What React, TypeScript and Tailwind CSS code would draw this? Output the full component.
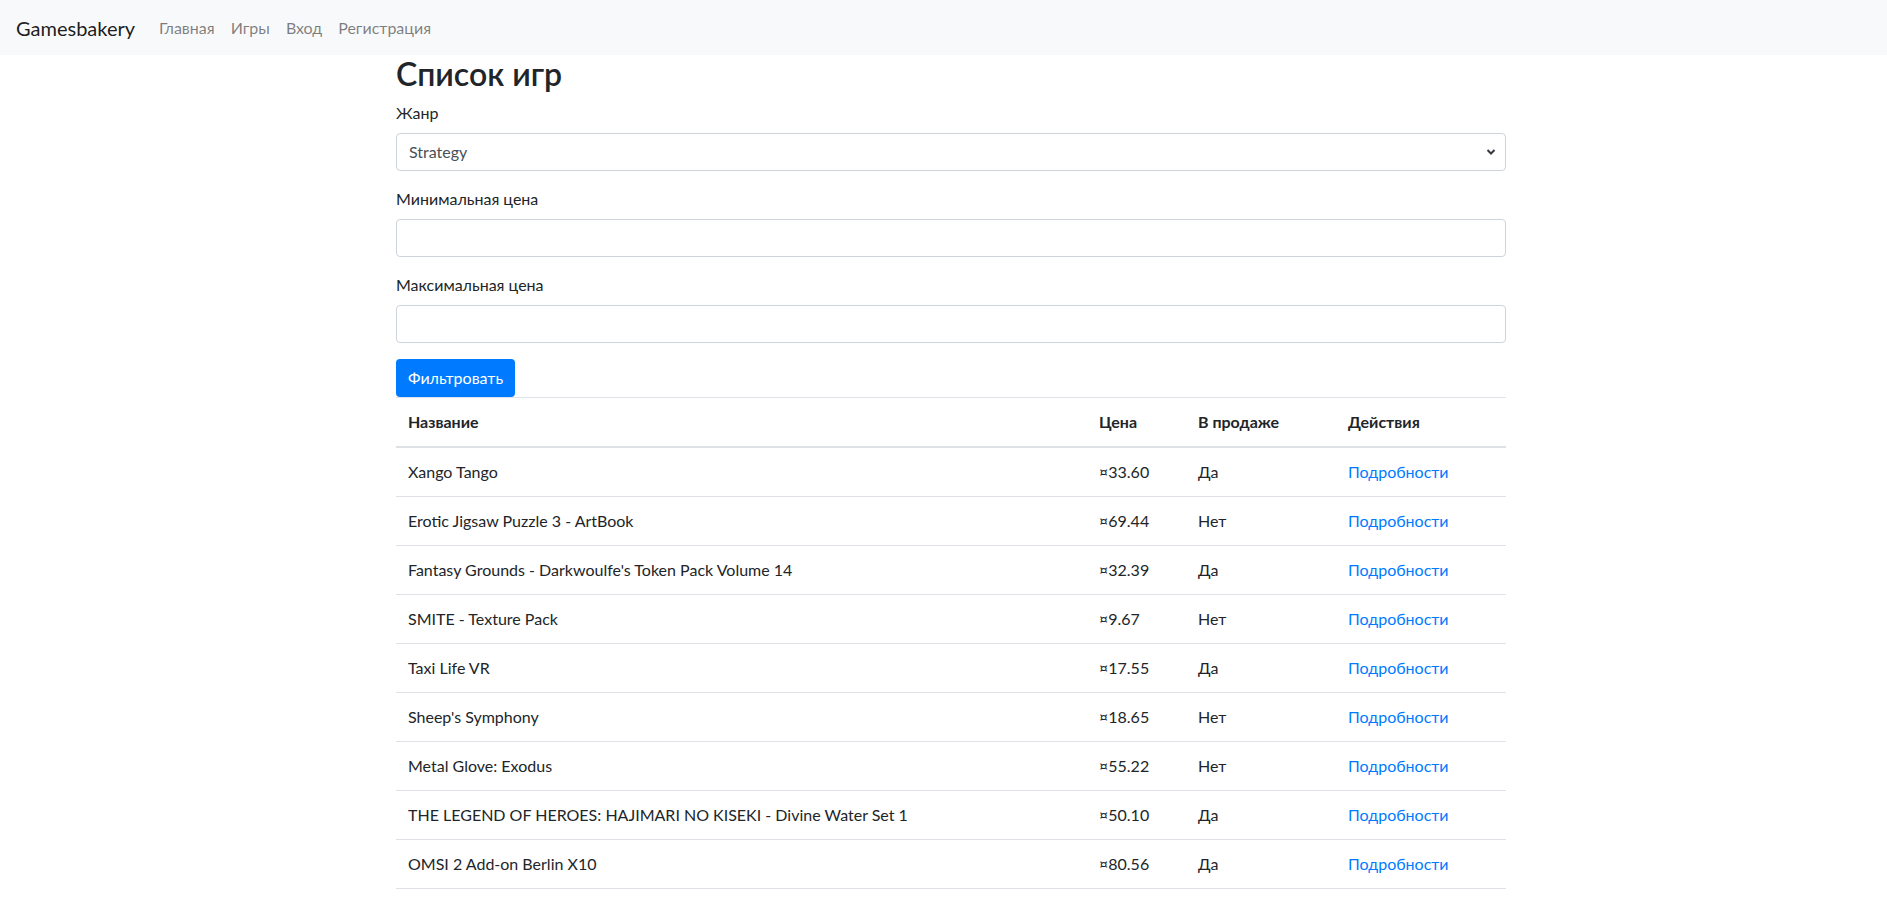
import React from "react";

const rows: [string, string, string][] = [
  ["Xango Tango", "¤33.60", "Да"],
  ["Erotic Jigsaw Puzzle 3 - ArtBook", "¤69.44", "Нет"],
  ["Fantasy Grounds - Darkwoulfe's Token Pack Volume 14", "¤32.39", "Да"],
  ["SMITE - Texture Pack", "¤9.67", "Нет"],
  ["Taxi Life VR", "¤17.55", "Да"],
  ["Sheep's Symphony", "¤18.65", "Нет"],
  ["Metal Glove: Exodus", "¤55.22", "Нет"],
  ["THE LEGEND OF HEROES: HAJIMARI NO KISEKI - Divine Water Set 1", "¤50.10", "Да"],
  ["OMSI 2 Add-on Berlin X10", "¤80.56", "Да"],
];

export default function App() {
  return (
    <div
      className="min-h-screen bg-white text-[16px] leading-[1.5] text-[#212529]"
      style={{ fontFamily: "Lato, 'Noto Sans', sans-serif" }}
    >
      <nav className="flex h-[55px] items-center bg-[#f8f9fa] px-4">
        <span className="mr-4 text-[20px] leading-[30px] text-[rgba(0,0,0,0.9)]">Gamesbakery</span>
        <div className="flex">
          {["Главная", "Игры", "Вход", "Регистрация"].map((t) => (
            <span key={t} className="px-2 py-2 text-[16px] text-[rgba(0,0,0,0.5)]">
              {t}
            </span>
          ))}
        </div>
      </nav>

      <div className="pl-[15px]">
        <main className="mx-auto w-[1110px]">
          <h2 className="mb-2 text-[32px] font-semibold leading-[1.2]">Список игр</h2>

          <div className="mb-4">
            <label className="mb-2 block">Жанр</label>
            <div className="relative">
              <select
                className="block h-[38px] w-full appearance-none rounded-[4px] border border-[#ced4da] bg-white pl-3 pr-7 text-[16px] text-[#495057] outline-none"
                defaultValue="Strategy"
              >
                <option>Strategy</option>
              </select>
              <svg
                className="pointer-events-none absolute right-[10px] top-[15px]"
                width="10"
                height="8"
                viewBox="0 0 10 8"
              >
                <path d="M1.5 2L5 5.5L8.5 2" stroke="#343a40" strokeWidth="2" fill="none" />
              </svg>
            </div>
          </div>

          <div className="mb-4">
            <label className="mb-2 block">Минимальная цена</label>
            <input className="block h-[38px] w-full rounded-[4px] border border-[#ced4da] px-3 outline-none" />
          </div>

          <div className="mb-4">
            <label className="mb-2 block">Максимальная цена</label>
            <input className="block h-[38px] w-full rounded-[4px] border border-[#ced4da] px-3 outline-none" />
          </div>

          <button className="h-[38px] rounded-[4px] bg-[#007bff] px-3 text-[16px] text-white">Фильтровать</button>

          <table className="w-full table-fixed border-collapse">
            <thead>
              <tr className="border-t border-b-2 border-t-[#dee2e6] border-b-[#dee2e6]">
                <th className="w-[691px] p-3 text-left font-bold">Название</th>
                <th className="w-[99px] p-3 text-left font-bold">Цена</th>
                <th className="w-[150px] p-3 text-left font-bold">В продаже</th>
                <th className="w-[170px] p-3 text-left font-bold">Действия</th>
              </tr>
            </thead>
            <tbody>
              {rows.map(([name, price, sale], i) => (
                <tr
                  key={i}
                  className={
                    i === rows.length - 1
                      ? "border-t border-b border-[#dee2e6]"
                      : "border-t border-[#dee2e6]"
                  }
                >
                  <td className="p-3">{name}</td>
                  <td className="p-3">{price}</td>
                  <td className="p-3">{sale}</td>
                  <td className="p-3 text-[#007bff]">Подробности</td>
                </tr>
              ))}
            </tbody>
          </table>
        </main>
      </div>
    </div>
  );
}
